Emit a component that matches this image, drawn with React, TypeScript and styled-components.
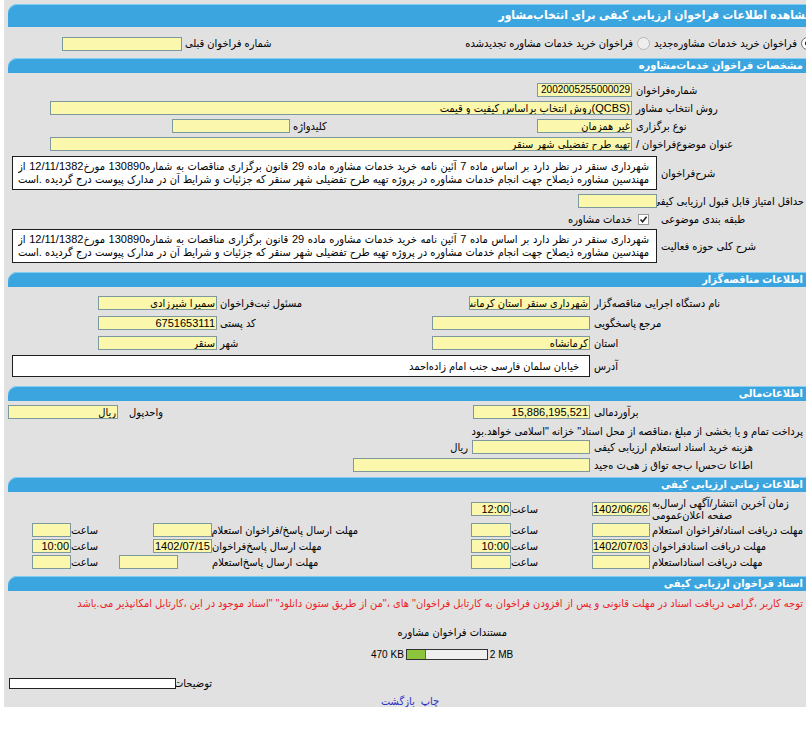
import React from "react";
import styled, { createGlobalStyle } from "styled-components";

const Z = "\u200c";

const GlobalStyle = createGlobalStyle`
  html, body {
    margin: 0;
    padding: 0;
    background: #fff;
    overflow: hidden;
  }
  body {
    font-family: "Liberation Sans", "DejaVu Sans Condensed", "DejaVu Sans", sans-serif;
    font-size: 11px;
    color: #000;
  }
`;

const Page = styled.div`
  width: 812px;
  margin-left: 4px;
  padding-top: 4px;
  background: #e1e1e1;
  direction: rtl;
`;

const SectionBar = styled.div<{ $main?: boolean }>`
  margin-left: 4px;
  height: ${(p) => (p.$main ? 23 : 15)}px;
  line-height: ${(p) => (p.$main ? 23 : 15)}px;
  padding-right: ${(p) => (p.$main ? 4 : 13)}px;
  background: #3aa5df;
  box-shadow: inset 0 1px 0 #86cdf3;
  border-top-left-radius: 9px;
  color: #fff;
  font-size: ${(p) => (p.$main ? 12 : 11)}px;
  font-weight: bold;
  white-space: nowrap;
  overflow: hidden;
`;

const Block = styled.div<{ $pt?: number; $pb?: number }>`
  padding-top: ${(p) => p.$pt ?? 0}px;
  padding-bottom: ${(p) => p.$pb ?? 0}px;
`;

const Row = styled.div<{ $h: number; $mt?: number; $pr?: number; $pl?: number }>`
  display: flex;
  align-items: center;
  height: ${(p) => p.$h}px;
  margin-top: ${(p) => p.$mt ?? 0}px;
  padding-right: ${(p) => p.$pr ?? 12}px;
  padding-left: ${(p) => p.$pl ?? 0}px;
`;

const Cell = styled.div<{ $w?: number; $pl?: number; $pr?: number; $start?: boolean }>`
  flex: none;
  box-sizing: border-box;
  width: ${(p) => (p.$w ? `${p.$w}px` : "auto")};
  padding-left: ${(p) => p.$pl ?? 0}px;
  padding-right: ${(p) => p.$pr ?? 0}px;
  text-align: ${(p) => (p.$start ? "right" : "left")};
  white-space: nowrap;
  line-height: 12px;
`;

const Field = styled.div<{ $w: number; $mr?: number; $num?: boolean }>`
  flex: none;
  box-sizing: border-box;
  width: ${(p) => p.$w}px;
  height: 14px;
  margin-right: ${(p) => p.$mr ?? 0}px;
  padding: 0 1px;
  border: 1px solid #7d999c;
  background: #fbf7ac;
  font-size: ${(p) => (p.$num ? 10 : 11)}px;
  line-height: 12px;
  text-align: right;
  white-space: nowrap;
  overflow: hidden;
`;

const Memo = styled.div<{ $w: number; $h: number }>`
  flex: none;
  box-sizing: border-box;
  width: ${(p) => p.$w}px;
  height: ${(p) => p.$h}px;
  padding: 3px 7px 0 5px;
  border: 1px solid #1e1e1e;
  background: #fff;
  line-height: 13px;
  overflow: hidden;
`;

const MemoLine = styled.div`
  height: 13px;
  overflow: hidden;
  text-align: justify;
  text-align-last: justify;
`;

const AddressBox = styled(Memo)`
  padding: 0 10px 0 0;
  line-height: 20px;
  white-space: nowrap;
`;

const Radio = styled.span<{ $on?: boolean }>`
  flex: none;
  position: relative;
  box-sizing: border-box;
  width: 13px;
  height: 13px;
  border-radius: 50%;
  border: 1px solid ${(p) => (p.$on ? "#6f6f6f" : "#b8b8b8")};
  background: ${(p) => (p.$on ? "#fff" : "#eeeeee")};
  &::after {
    content: "";
    display: ${(p) => (p.$on ? "block" : "none")};
    position: absolute;
    left: 3px;
    top: 3px;
    width: 5px;
    height: 5px;
    border-radius: 50%;
    background: #1a1a1a;
  }
`;

const Gap = styled.span<{ $w: number }>`
  flex: none;
  width: ${(p) => p.$w}px;
`;

const PushLeft = styled.div`
  display: flex;
  align-items: center;
  gap: 3px;
  margin-right: auto;
`;

const CheckBox = styled.span`
  flex: none;
  display: flex;
  align-items: center;
  justify-content: center;
  box-sizing: border-box;
  width: 11px;
  height: 11px;
  margin-right: 8px;
  margin-left: 6px;
  border: 1px solid #9a9a9a;
  background: #fff;
`;

const PayNote = styled.div`
  box-sizing: border-box;
  height: 17px;
  padding: 4px 13px 0 0;
  line-height: 13px;
  white-space: nowrap;
`;

const TimeGrid = styled.div`
  display: grid;
  grid-template-columns: 152px 60px 81px 40px 113px 146px 60px 81px 40px;
  grid-template-rows: 26px 16px 16px 16px;
  align-items: center;
  padding: 4px 12px 6px 0;
`;

const TimeLabel = styled.div`
  text-align: left;
  white-space: nowrap;
  line-height: 12px;
`;

const TimeField = styled(Field)`
  justify-self: start;
`;

const Notice = styled.div`
  margin-top: 5px;
  padding-right: 13px;
  line-height: 14px;
  color: #ee1d25;
  white-space: nowrap;
`;

const DocTitle = styled.div`
  margin-top: 15px;
  padding-right: 309px;
  line-height: 14px;
  white-space: nowrap;
`;

const UsageRow = styled.div`
  direction: ltr;
  display: flex;
  align-items: center;
  gap: 2px;
  height: 16px;
  margin-top: 7px;
  padding-left: 367px;
  font-size: 10px;
`;

const Meter = styled.div`
  display: flex;
  box-sizing: border-box;
  width: 82px;
  height: 11px;
  border: 1px solid #333;
  background: #efefef;
`;

const MeterFill = styled.div`
  height: 100%;
  background: #8cc43c;
  border-right: 1px solid #4f7d15;
`;

const DescBox = styled.div`
  flex: none;
  box-sizing: border-box;
  width: 167px;
  height: 11px;
  border: 1px solid #222;
  background: #fff;
`;

const LinkRow = styled.div`
  display: flex;
  justify-content: center;
  gap: 6px;
  height: 12px;
  margin-top: 4px;
  line-height: 12px;
`;

const NavLink = styled.a`
  color: #2f2fc4;
  text-decoration: none;
`;

const descLines = [
  "شهرداری سنقر در نظر دارد بر اساس ماده 7 آئین نامه خرید خدمات مشاوره ماده 29 قانون برگزاری مناقصات به شماره130890 مورخ12/11/1382 از",
  "مهندسین مشاوره ذیصلاح جهت انجام خدمات مشاوره در پروژه تهیه طرح تفضیلی شهر سنقر که جزئیات و شرایط آن در مدارک پیوست درج گردیده .است",
];

type TimeRow = {
  label: string[];
  date: string;
  time: string;
  reply?: { label: string; date: string; time: string; shift?: number };
};

const timeRows: TimeRow[] = [
  { label: [`زمان آخرین انتشار/آگهی ارسال${Z}به`, `صفحه اعلان${Z}عمومی`], date: "1402/06/26", time: "12:00" },
  {
    label: ["مهلت دریافت اسناد/فراخوان استعلام"],
    date: "",
    time: "",
    reply: { label: "مهلت ارسال پاسخ/فراخوان استعلام", date: "", time: "" },
  },
  {
    label: ["مهلت دریافت اسنادفراخوان"],
    date: "1402/07/03",
    time: "10:00",
    reply: { label: `مهلت ارسال پاسخ${Z}فراخوان`, date: "1402/07/15", time: "10:00" },
  },
  {
    label: ["مهلت دریافت اسناداستعلام"],
    date: "",
    time: "",
    reply: { label: `مهلت ارسال پاسخ${Z}استعلام`, date: "", time: "", shift: 34 },
  },
];

const MemoText = () => (
  <Memo $w={645} $h={34}>
    {descLines.map((l) => (
      <MemoLine key={l}>{l}</MemoLine>
    ))}
  </Memo>
);

const CheckMark = () => (
  <svg width="9" height="9" viewBox="0 0 9 9">
    <path d="M1.5 4.5 L3.6 6.8 L7.6 1.8" fill="none" stroke="#222" strokeWidth="1.6" />
  </svg>
);

export default function App() {
  const usedKb = 470;
  const maxKb = 2048;

  return (
    <>
      <GlobalStyle />
      <Page>
        <SectionBar $main>مشاهده اطلاعات فراخوان ارزیابی کیفی برای انتخاب{Z}مشاور</SectionBar>

        <Row $h={29} $mt={2} $pr={2} $pl={58}>
          <Radio $on />
          <Gap $w={4} />
          <span>فراخوان خرید خدمات مشاوره{Z}جدید</span>
          <Gap $w={4} />
          <Radio />
          <Gap $w={4} />
          <span>فراخوان خرید خدمات مشاوره تجدیدشده</span>
          <PushLeft>
            <span>شماره فراخوان قبلی</span>
            <Field $w={120} />
          </PushLeft>
        </Row>

        <SectionBar>مشخصات فراخوان خدمات{Z}مشاوره</SectionBar>
        <Block $pt={8} $pb={10}>
          <Row $h={18}>
            <Cell $w={172} $pl={4}>شماره{Z}فراخوان</Cell>
            <Field $w={95} $num>2002005255000029</Field>
          </Row>
          <Row $h={18}>
            <Cell $w={172} $pl={4}>روش انتخاب مشاور</Cell>
            <Field $w={582}>(QCBS)روش انتخاب براساس کیفیت و قیمت</Field>
          </Row>
          <Row $h={18}>
            <Cell $w={172} $pl={4}>نوع برگزاری</Cell>
            <Field $w={95}>غیر همزمان</Field>
            <Cell $w={247} $pl={3}>کلیدواژه</Cell>
            <Field $w={118} />
          </Row>
          <Row $h={18}>
            <Cell $w={172} $pl={4}>عنوان  موضوع{Z}فراخوان /</Cell>
            <Field $w={582}>تهیه طرح تفضیلی شهر سنقر</Field>
          </Row>

          <Row $h={34} $mt={3}>
            <Cell $w={147} $pl={4}>شرح{Z}فراخوان</Cell>
            <MemoText />
          </Row>
          <Row $h={18} $mt={2}>
            <Cell $w={147} $pl={4}>حداقل امتیاز قابل قبول ارزیابی کیفی</Cell>
            <Field $w={79} />
          </Row>
          <Row $h={18}>
            <Cell $w={147} $pl={4}>طبقه بندی موضوعی</Cell>
            <CheckBox>
              <CheckMark />
            </CheckBox>
            <span>خدمات مشاوره</span>
          </Row>
          <Row $h={33} $mt={1}>
            <Cell $w={147} $pl={4}>شرح کلی حوزه فعالیت</Cell>
            <MemoText />
          </Row>
        </Block>

        <SectionBar>اطلاعات مناقصه{Z}گزار</SectionBar>
        <Block $pt={6} $pb={9}>
          <Row $h={20}>
            <Cell $w={214} $pl={4}>نام دستگاه اجرایی مناقصه{Z}گزار</Cell>
            <Cell $w={285}>
              <Field $w={121}>شهرداری سنقر استان کرمانشاه</Field>
            </Cell>
            <Cell $w={88} $pl={3}>مسئول ثبت{Z}فراخوان</Cell>
            <Field $w={119}>سمیرا شیرزادی</Field>
          </Row>
          <Row $h={20}>
            <Cell $w={214} $pl={4}>مرجع پاسخگویی</Cell>
            <Cell $w={285}>
              <Field $w={158} />
            </Cell>
            <Cell $w={88} $pl={3}>کد پستی</Cell>
            <Field $w={119}>6751653111</Field>
          </Row>
          <Row $h={20}>
            <Cell $w={214} $pl={4}>استان</Cell>
            <Cell $w={285}>
              <Field $w={158}>کرمانشاه</Field>
            </Cell>
            <Cell $w={88} $pl={3}>شهر</Cell>
            <Field $w={119}>سنقر</Field>
          </Row>
          <Row $h={22} $mt={2}>
            <Cell $w={214} $pl={4}>آدرس</Cell>
            <AddressBox $w={578} $h={22}>
              خیابان سلمان فارسی جنب امام زاده{Z}احمد
            </AddressBox>
          </Row>
        </Block>

        <SectionBar>اطلاعات{Z}مالی</SectionBar>
        <Block $pt={2} $pb={3}>
          <Row $h={18}>
            <Cell $w={214} $pl={4}>برآوردمالی</Cell>
            <Cell $w={424}>
              <Field $w={117}>15,886,195,521</Field>
            </Cell>
            <Cell $w={48} $pr={3} $start>واحدپول</Cell>
            <Field $w={110}>ریال</Field>
          </Row>
          <PayNote>پرداخت تمام و یا بخشی از مبلغ ،مناقصه از محل اسناد" خزانه "اسلامی خواهد.بود</PayNote>
          <Row $h={18}>
            <Cell $w={214} $pl={4}>هزینه خرید اسناد استعلام ارزیابی کیفی</Cell>
            <Field $w={118} />
            <Gap $w={4} />
            <span>ریال</span>
          </Row>
          <Row $h={18}>
            <Cell $w={214} $pl={4}>
              اط{Z}اعا ت{Z}حس{Z}ا ب{Z}جه توا{Z}ق ز هی{Z}ت ه{Z}جید
            </Cell>
            <Field $w={237} />
          </Row>
        </Block>

        <SectionBar>اطلاعات زمانی ارزیابی کیفی</SectionBar>
        <TimeGrid>
          {timeRows.map((r, i) => (
            <React.Fragment key={i}>
              <TimeLabel>
                {r.label.map((l) => (
                  <div key={l}>{l}</div>
                ))}
              </TimeLabel>
              <TimeField $w={58} $mr={2}>{r.date}</TimeField>
              <TimeLabel>ساعت</TimeLabel>
              <TimeField $w={40}>{r.time}</TimeField>
              <span />
              {r.reply ? (
                <>
                  <TimeLabel>{r.reply.label}</TimeLabel>
                  <TimeField $w={59} $mr={r.reply.shift ?? 0}>{r.reply.date}</TimeField>
                  <TimeLabel>ساعت</TimeLabel>
                  <TimeField $w={39}>{r.reply.time}</TimeField>
                </>
              ) : (
                <>
                  <span />
                  <span />
                  <span />
                  <span />
                </>
              )}
            </React.Fragment>
          ))}
        </TimeGrid>

        <SectionBar>اسناد فراخوان ارزیابی کیفی</SectionBar>
        <Notice>
          توجه کاربر ،گرامی دریافت اسناد در مهلت قانونی و پس از افزودن فراخوان به کارتابل فراخوان" های ،"من از طریق ستون دانلود" "اسناد موجود در این ،کارتابل امکانپذیر می.باشد
        </Notice>
        <DocTitle>مستندات فراخوان مشاوره</DocTitle>
        <UsageRow>
          <span>470 KB</span>
          <Meter>
            <MeterFill style={{ width: `${Math.round((usedKb / maxKb) * 80)}px` }} />
          </Meter>
          <span>2 MB</span>
        </UsageRow>
        <Row $h={16} $mt={13} $pr={604}>
          <Cell $w={36} $pl={1}>توضیحات</Cell>
          <DescBox />
        </Row>
        <LinkRow>
          <NavLink href="#">چاپ</NavLink>
          <NavLink href="#">بازگشت</NavLink>
        </LinkRow>
      </Page>
    </>
  );
}
